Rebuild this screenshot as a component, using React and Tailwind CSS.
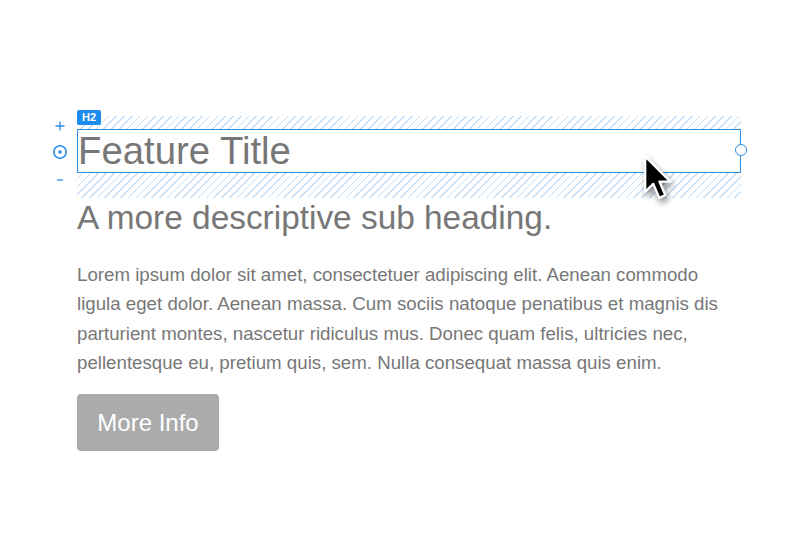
import React from 'react'

function Cursor() {
  return (
    <svg
      className="absolute left-[566px] top-[38px] drop-shadow-[2px_4px_3px_rgba(0,0,0,0.45)]"
      width="30"
      height="50"
      viewBox="0 0 14 23"
    >
      <path
        d="M1 1 L1 17.5 L4.8 13.8 L7.6 20.3 L10.4 19.1 L7.7 12.7 L12.8 12.7 Z"
        fill="#000"
        stroke="#fff"
        strokeWidth="1.1"
        strokeLinejoin="round"
      />
    </svg>
  )
}

function SideControls() {
  return (
    <svg className="absolute left-[-25px] top-[2px]" width="16" height="72" viewBox="0 0 16 72">
      {/* plus */}
      <path d="M8 3.5 V12.5 M3.5 8 H12.5" stroke="#2d8fe6" strokeWidth="1.3" />
      {/* target */}
      <circle cx="8" cy="34" r="6.2" fill="none" stroke="#2d8fe6" strokeWidth="1.5" />
      <circle cx="8" cy="34" r="1.8" fill="#2d8fe6" />
      {/* minus */}
      <path d="M5 62 H11" stroke="#2d8fe6" strokeWidth="1.3" />
    </svg>
  )
}

export default function App() {
  return (
    <div className="min-h-[547px] bg-white pl-[77px] pt-[116px] font-['Liberation_Sans',Arial,sans-serif] text-[#777]">
      <div className="w-[664px]">
        {/* selected heading with margin hatch */}
        <div className="relative rounded-[3px] bg-[repeating-linear-gradient(135deg,#c4def6_0px,#c4def6_1.2px,transparent_1.2px,transparent_5.5px)] pb-[25px] pt-[13px]">
          <span className="absolute left-0 top-[-6px] flex h-[15px] w-[24px] items-center justify-center rounded-[2px] bg-[#1d8cef] text-[11px] font-bold leading-none text-white">
            H2
          </span>
          <SideControls />
          <div className="h-[44px] overflow-hidden border border-[#2d8fe6] bg-white">
            <h2 className="text-[38.3px] leading-[42px] text-[#777]">Feature Title</h2>
          </div>
          <span className="absolute right-[-6px] top-[28px] h-[12px] w-[12px] rounded-full border-[1.5px] border-[#2d8fe6] bg-white" />
          <Cursor />
        </div>

        <h3 className="mt-[3px] text-[33.4px] leading-[33px]">A more descriptive sub heading.</h3>

        <p className="mt-[26px] text-[18.7px] leading-[29.3px]">
          Lorem ipsum dolor sit amet, consectetuer adipiscing elit. Aenean commodo ligula eget dolor. Aenean massa. Cum sociis natoque penatibus et magnis dis parturient montes, nascetur ridiculus mus. Donec quam felis, ultricies nec, pellentesque eu, pretium quis, sem. Nulla consequat massa quis enim.
        </p>

        <button className="mt-[17px] flex h-[57px] w-[142px] items-center justify-center rounded-[4px] bg-[#ababab] text-[24px] text-white">
          More Info
        </button>
      </div>
    </div>
  )
}
